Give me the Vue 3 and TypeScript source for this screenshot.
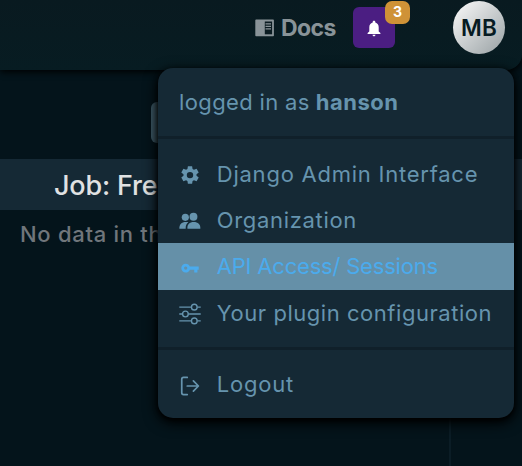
<script setup lang="ts">
interface MenuItem {
  label: string
  icon: 'gear' | 'people' | 'key' | 'sliders'
  active?: boolean
}

const items: MenuItem[] = [
  { label: 'Django Admin Interface', icon: 'gear' },
  { label: 'Organization', icon: 'people' },
  { label: 'API Access/ Sessions', icon: 'key', active: true },
  { label: 'Your plugin configuration', icon: 'sliders' },
]
</script>

<template>
  <div class="page">
    <header class="topbar">
      <a class="docs">
        <svg width="20" height="18" viewBox="0 0 20 18">
          <rect x="0.3" y="0.6" width="18.600" height="16.600" rx="0.8" fill="#899398" />
          <rect x="9.800" y="2.500" width="7.300" height="12.800" fill="#0a1b21" />
          <path d="M10.500 4.900H16M10.500 7.400H16M10.500 9.900H16" stroke="#899398" stroke-width="1.300" />
        </svg>
        <span>Docs</span>
      </a>
      <button class="bell">
        <svg width="16" height="18" viewBox="0 0 16 18" fill="#fff">
          <path d="M8 .8c.8 0 1.300.5 1.300 1.300v.5c2.200.6 3.400 2.400 3.400 4.600v4.200l1.700 1.700v.8H1.600v-.8l1.700-1.700V7.200c0-2.200 1.200-4 3.400-4.600v-.5C6.700 1.300 7.200.8 8 .8zM6.500 14.700h3c0 .9-.6 1.500-1.500 1.500s-1.500-.6-1.500-1.500z" />
        </svg>
        <span class="badge">3</span>
      </button>
      <div class="avatar"><span>MB</span></div>
    </header>

    <main class="content">
      <div class="toolbar"><div class="field"></div></div>
      <div class="table-head"><span>Job: Free</span></div>
      <div class="table-empty"><span>No data in this</span></div>
      <div class="edge"></div>
    </main>

    <nav class="menu">
      <div class="user"><span class="user-pre">logged in as</span><strong>hanson</strong></div>
      <hr />
      <div v-for="item in items" :key="item.icon" class="item" :class="[item.icon, { active: item.active }]">
        <svg v-if="item.icon === 'gear'" class="icon" viewBox="0 0 24 24" fill="currentColor">
          <path fill-rule="evenodd" d="M9.700 2.500h4.600l.5 3 1.500.9 2.900-1.100 2.300 4-2.400 1.900v1.700l2.400 1.900-2.300 4-2.900-1.100-1.500.9-.5 3H9.700l-.5-3-1.500-.9-2.900 1.100-2.300-4 2.400-1.900v-1.700L2.500 9.300l2.300-4 2.900 1.100 1.500-.9zM12 8.600a3.500 3.500 0 1 0 0 7 3.500 3.500 0 0 0 0-7z" />
        </svg>
        <svg v-else-if="item.icon === 'people'" class="icon" viewBox="0 0 24 24" fill="currentColor">
          <circle cx="15.800" cy="7.300" r="4.300" />
          <circle cx="6.900" cy="8" r="3.900" />
          <path d="M9.200 20.500c-.4-4.800 2.300-7.300 6.900-7.300s7.600 2.500 7.200 7.300zM.4 20.500c-.2-4.800 2.500-7.700 7.500-7.500 1 0 1.800.2 2.300.4-2.200 1.700-3.100 4-2.900 7.100z" />
        </svg>
        <svg v-else-if="item.icon === 'key'" class="icon" viewBox="0 0 24 24" fill="currentColor">
          <path fill-rule="evenodd" d="M7.300 7.300c2.200 0 3.800 1.300 4.500 3.100h9.700v3.400h-1.400v3.100h-3.500v-3.100h-4.800c-.7 1.800-2.300 3.100-4.500 3.100a4.800 4.800 0 0 1 0-9.600zm0 3a1.800 1.800 0 1 0 0 3.600 1.800 1.800 0 0 0 0-3.600z" />
        </svg>
        <svg v-else class="icon" viewBox="0 0 24 24" fill="none" stroke="currentColor" stroke-width="1.500">
          <path d="M.3 4.500H13.500M20 4.500h3.700M.3 12H4M10 12h13.700M.3 19.500H13.500M20 19.500h3.700" />
          <circle cx="16.700" cy="4.500" r="3.100" /><circle cx="7" cy="12" r="3.100" /><circle cx="16.700" cy="19.500" r="3.100" />
        </svg>
        <span>{{ item.label }}</span>
      </div>
      <hr />
      <div class="item logout">
        <svg class="icon" viewBox="0 0 24 24" fill="none" stroke="currentColor" stroke-width="1.900" stroke-linecap="round" stroke-linejoin="round">
          <path d="M9 2.700H5Q3 2.700 3 4.700v14.600q0 2 2 2h4M9 12h12M15.700 6.500l5.500 5.500-5.500 5.500" />
        </svg>
        <span>Logout</span>
      </div>
    </nav>
  </div>
</template>

<style>
body {
  margin: 0;
  overflow: hidden;
  background: #04141b;
}
</style>

<style scoped>
.page {
  position: relative;
  width: 522px;
  height: 466px;
  overflow: hidden;
  background: #04141b;
  font-family: Inter, "Open Sans", sans-serif;
  box-sizing: border-box;
}
.page * {
  box-sizing: border-box;
}
span, strong {
  white-space: nowrap;
}
.topbar {
  position: relative;
  z-index: 1;
  display: flex;
  height: 70px;
  background: linear-gradient(#091a20, #071c22);
  border-bottom-right-radius: 16px;
  box-shadow: 0 2px 7px #000;
}
.docs {
  display: flex;
  align-items: center;
  gap: 6px;
  width: 98px;
  height: 55px;
  margin-left: 255px;
  color: #899398;
  font-size: 23px;
  font-weight: 700;
  letter-spacing: -0.600px;
}
.bell {
  position: relative;
  display: flex;
  align-items: center;
  justify-content: center;
  width: 42px;
  height: 41px;
  margin: 7px 0 0;
  padding: 3px 0 0;
  border: 0;
  border-radius: 6px;
  background: #4b1e82;
}
.badge {
  position: absolute;
  top: -6px;
  left: 32px;
  width: 25px;
  height: 23px;
  border-radius: 7px;
  background: #cf9237;
  color: #fff;
  font: 700 14px/21px Inter, sans-serif;
  text-align: center;
}
.avatar {
  display: flex;
  align-items: center;
  justify-content: center;
  width: 52px;
  height: 53px;
  margin: 1px 0 0 58px;
  border-radius: 50%;
  background: linear-gradient(135deg, #f2f2f2 10%, #9da5a8 95%);
  color: #071b22;
  font-size: 22.500px;
  font-weight: 600;
  letter-spacing: 0.300px;
}
.content {
  height: 396px;
  display: flex;
  flex-direction: column;
}
.toolbar {
  height: 89px;
  padding: 32px 0 0 151px;
}
.field {
  width: 60px;
  height: 41px;
  border-radius: 6px;
  background: #3d5966;
}
.table-head {
  height: 51px;
  padding-left: 54px;
  background: #152935;
  color: #e0e2e3;
  font-size: 27px;
  font-weight: 500;
  line-height: 54px;
  letter-spacing: -0.200px;
}
.table-empty {
  height: 48px;
  padding-left: 20px;
  color: #70767b;
  font-size: 22px;
  font-weight: 500;
  line-height: 48px;
  letter-spacing: 0.700px;
}
.edge {
  flex: 1;
  width: 451px;
  border-right: 2px solid #0b1d26;
}
.menu {
  position: absolute;
  z-index: 2;
  top: 68px;
  left: 157.600px;
  width: 356.800px;
  height: 350.400px;
  padding: 11px 0;
  border-radius: 15px;
  background: #152935;
  box-shadow: 0 4px 14px 1px #000, 0 2px 5px #000;
  color: #6694ae;
  font-size: 22px;
}
.user {
  display: flex;
  align-items: center;
  height: 46.400px;
  padding: 0 0 1px 21.500px;
}
.user-pre {
  letter-spacing: 0.350px;
}
.user strong {
  margin-left: 6px;
  letter-spacing: 0.500px;
}
hr {
  height: 3px;
  margin: 11px 0;
  border: 0;
  background: #10202a;
}
.item {
  display: flex;
  align-items: center;
  height: 46.400px;
  padding: 0 0 0 21px;
}
.item span {
  letter-spacing: 0.760px;
}
.people span {
  letter-spacing: 0.670px;
}
.key span {
  letter-spacing: -0.200px;
}
.sliders span {
  letter-spacing: 0.540px;
}
.logout {
  padding-bottom: 1px;
}
.icon {
  flex: none;
  width: 22px;
  height: 22px;
  margin: 3px 16.200px 0 0;
}
.logout .icon {
  margin-top: 5px;
}
.active {
  background: #6590a8;
  color: #4babed;
}
</style>
